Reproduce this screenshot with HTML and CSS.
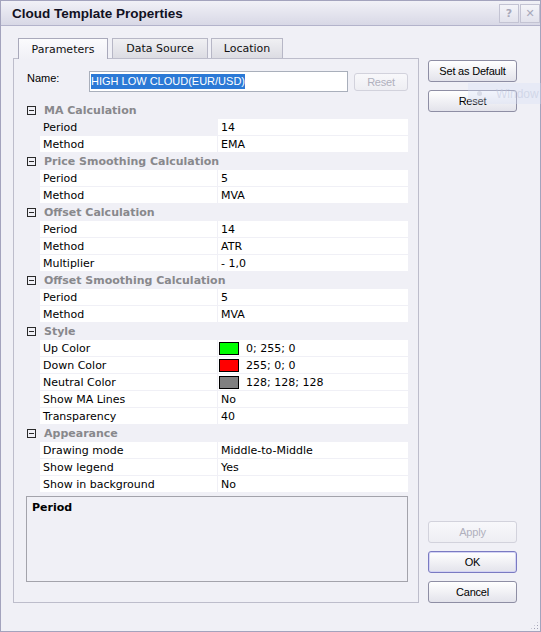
FILE: index.html
```html
<!DOCTYPE html>
<html lang="en">
<head>
    <meta charset="UTF-8">
    <title>Cloud Template Properties</title>
    <link rel="stylesheet" href="styles.css">
</head>
<body>
<div class="window">
    <div class="titlebar">
        <span class="title">Cloud Template Properties</span>
        <div class="title-buttons">
            <span class="tbtn">?</span>
            <span class="tbtn">&#x2715;</span>
        </div>
    </div>

    <div class="content">
        <div class="main">
            <div class="tabs">
                <div class="tab tab-active tab-params">Parameters</div>
                <div class="tab tab-source">Data Source</div>
                <div class="tab tab-location">Location</div>
            </div>

            <div class="panel">
                <div class="name-row">
                    <label class="name-label">Name:</label>
                    <div class="name-input"><span class="selected">HIGH LOW CLOUD(EUR/USD)</span></div>
                    <button class="button button-small" disabled>Reset</button>
                </div>

                <div class="grid">
                    <div class="category"><span class="minus"></span>MA Calculation</div>
                    <div class="prop prop-selected"><div class="name">Period</div><div class="val">14</div></div>
                    <div class="prop"><div class="name">Method</div><div class="val">EMA</div></div>

                    <div class="category"><span class="minus"></span>Price Smoothing Calculation</div>
                    <div class="prop"><div class="name">Period</div><div class="val">5</div></div>
                    <div class="prop"><div class="name">Method</div><div class="val">MVA</div></div>

                    <div class="category"><span class="minus"></span>Offset Calculation</div>
                    <div class="prop"><div class="name">Period</div><div class="val">14</div></div>
                    <div class="prop"><div class="name">Method</div><div class="val">ATR</div></div>
                    <div class="prop"><div class="name">Multiplier</div><div class="val">- 1,0</div></div>

                    <div class="category"><span class="minus"></span>Offset Smoothing Calculation</div>
                    <div class="prop"><div class="name">Period</div><div class="val">5</div></div>
                    <div class="prop"><div class="name">Method</div><div class="val">MVA</div></div>

                    <div class="category"><span class="minus"></span>Style</div>
                    <div class="prop"><div class="name">Up Color</div><div class="val"><span class="swatch swatch-green"></span>0; 255; 0</div></div>
                    <div class="prop"><div class="name">Down Color</div><div class="val"><span class="swatch swatch-red"></span>255; 0; 0</div></div>
                    <div class="prop"><div class="name">Neutral Color</div><div class="val"><span class="swatch swatch-gray"></span>128; 128; 128</div></div>
                    <div class="prop"><div class="name">Show MA Lines</div><div class="val">No</div></div>
                    <div class="prop"><div class="name">Transparency</div><div class="val">40</div></div>

                    <div class="category"><span class="minus"></span>Appearance</div>
                    <div class="prop"><div class="name">Drawing mode</div><div class="val">Middle-to-Middle</div></div>
                    <div class="prop"><div class="name">Show legend</div><div class="val">Yes</div></div>
                    <div class="prop"><div class="name">Show in background</div><div class="val">No</div></div>
                </div>

                <div class="description">Period</div>
            </div>
        </div>

        <div class="side">
            <div class="side-group">
                <button class="button">Set as Default</button>
                <button class="button">Reset</button>
            </div>
            <div class="side-group">
                <button class="button" disabled>Apply</button>
                <button class="button button-default">OK</button>
                <button class="button">Cancel</button>
            </div>
        </div>
    </div>

    <div class="ghost"><span class="ghost-dot"></span>Window</div>
    <div class="grip"></div>
</div>
</body>
</html>
```

FILE: styles.css
```css
body {
    margin: 0;
    background-color: #ffffff;
}
.window {
    position: relative;
    width: 541px;
    height: 632px;
    box-sizing: border-box;
    border: 1px solid #a3a3bd;
    background-color: #f0f0f6;
    display: flex;
    flex-direction: column;
    font-family: "Liberation Sans", Arial, sans-serif;
    font-size: 11px;
    color: #000000;
}

/* title bar */
.titlebar {
    height: 24px;
    border-bottom: 1px solid #b3b3cb;
    background: linear-gradient(#f1f1f7, #d8d8e6);
    display: flex;
    align-items: center;
    padding-left: 11px;
}
.title {
    font-weight: bold;
    font-size: 13.5px;
    color: #111122;
    flex: 1;
}
.title-buttons {
    display: flex;
    gap: 1px;
    align-self: flex-start;
    margin-top: 3px;
}
.tbtn {
    width: 18px;
    height: 17px;
    border: 1px solid #c3c3d3;
    background: linear-gradient(#f4f4f9, #e2e2ec);
    color: #a8a8ba;
    font-family: "DejaVu Sans", sans-serif;
    font-weight: bold;
    font-size: 11px;
    display: flex;
    align-items: center;
    justify-content: center;
}

/* body */
.content {
    flex: 1;
    display: flex;
    gap: 9px;
    padding: 12px 23px 28px 12px;
}
.main {
    width: 406px;
    display: flex;
    flex-direction: column;
}

/* tabs */
.tabs {
    display: flex;
    height: 21px;
    margin-bottom: -1px;
    padding-left: 5px;
    position: relative;
    z-index: 1;
}
.tab {
    box-sizing: border-box;
    height: 20px;
    border: 1px solid #b7b7c6;
    border-bottom: none;
    background: linear-gradient(#f0f0f3, #dcdce3);
    font-family: "DejaVu Sans", sans-serif;
    font-size: 11px;
    display: flex;
    align-items: center;
    justify-content: center;
    color: #111111;
}
.tab-active {
    height: 21px;
    background: linear-gradient(#fbfbfd, #f0f0f6);
    border-color: #a9a9bb;
}
.tab-params {
    width: 90px;
}
.tab-source {
    width: 96px;
    margin-left: 4px;
}
.tab-location {
    width: 72px;
    margin-left: 3px;
}

/* panel */
.panel {
    box-sizing: border-box;
    height: 545px;
    border: 1px solid #bdbdcb;
    background-color: #f0f0f6;
    padding: 12px 9px 0 12px;
}
.name-row {
    display: flex;
    align-items: center;
    height: 21px;
}
.name-label {
    width: 63px;
    padding-left: 1px;
    box-sizing: border-box;
    align-self: flex-start;
    padding-top: 1px;
}
.name-input {
    box-sizing: border-box;
    width: 259px;
    height: 21px;
    border: 1px solid #a9afbb;
    background-color: #ffffff;
    padding: 2px 0 0 1px;
}
.selected {
    background-color: #2b79d6;
    color: #ffffff;
    line-height: 15px;
    display: inline-block;
}

/* buttons */
.button {
    box-sizing: border-box;
    width: 89px;
    height: 22px;
    border: 1px solid #8e8ea4;
    border-radius: 3px;
    background: linear-gradient(#ffffff, #e3e3eb);
    font-family: "Liberation Sans", Arial, sans-serif;
    font-size: 11px;
    letter-spacing: -0.2px;
    color: #000000;
    padding: 0;
}
.button:disabled {
    border-color: #d2d2dc;
    background: linear-gradient(#f8f8fb, #eeeef3);
    color: #b0b0bd;
}
.button-small {
    width: 54px;
    height: 18px;
    margin-left: 6px;
}
.button-default {
    border-color: #7a7ac2;
    box-shadow: inset 0 0 0 1px #d4d4f4;
}

/* property grid */
.grid {
    margin-top: 10px;
    width: 382px;
    font-family: "DejaVu Sans", sans-serif;
    font-size: 11px;
}
.category {
    height: 17px;
    display: flex;
    align-items: center;
    font-weight: bold;
    color: #88888c;
    padding-bottom: 1px;
    box-sizing: border-box;
}
.minus {
    box-sizing: border-box;
    width: 9px;
    height: 9px;
    border: 1px solid #2a2a2a;
    margin: 1px 8px 0 1px;
    position: relative;
}
.minus::after {
    content: "";
    position: absolute;
    left: 1px;
    right: 1px;
    top: 3px;
    height: 1px;
    background-color: #2a2a2a;
}
.prop {
    display: grid;
    grid-template-columns: 177px 190px;
    column-gap: 1px;
    height: 16px;
    margin: 0 0 1px 14px;
}
.name, .val {
    background-color: #ffffff;
    padding: 1px 0 0 3px;
    box-sizing: border-box;
    white-space: nowrap;
    display: flex;
    align-items: center;
}
.prop-selected .name {
    background-color: #f0f0f6;
}
.swatch {
    box-sizing: border-box;
    width: 20px;
    height: 13px;
    border: 1px solid #000000;
    margin: 0 7px 0 -2px;
}
.swatch-green {
    background-color: #00ff00;
}
.swatch-red {
    background-color: #ff0000;
}
.swatch-gray {
    background-color: #808080;
}
.description {
    box-sizing: border-box;
    margin-top: 4px;
    width: 382px;
    height: 86px;
    border: 1px solid #a3a3ab;
    padding: 4px 5px;
    font-family: "DejaVu Sans", sans-serif;
    font-weight: bold;
    font-size: 11px;
}

/* right column */
.side {
    width: 89px;
    padding-top: 22px;
    display: flex;
    flex-direction: column;
    justify-content: space-between;
}
.side-group {
    display: flex;
    flex-direction: column;
    gap: 8px;
}

/* faded notification laid over the buttons */
.ghost {
    position: absolute;
    left: 467px;
    top: 82px;
    width: 73px;
    height: 21px;
    background-color: rgba(214, 224, 246, 0.35);
    color: rgba(190, 198, 220, 0.55);
    font-size: 12px;
    display: flex;
    align-items: center;
    padding-left: 9px;
    box-sizing: border-box;
    gap: 14px;
    white-space: nowrap;
}
.ghost-dot {
    width: 5px;
    height: 5px;
    border-radius: 50%;
    background-color: rgba(200, 204, 218, 0.6);
}
.grip {
    position: absolute;
    right: 1px;
    bottom: 1px;
    width: 9px;
    height: 9px;
    background:
        radial-gradient(circle, #a0a0b4 0.8px, transparent 1px) 0 0 / 3px 3px;
    clip-path: polygon(100% 0, 100% 100%, 0 100%);
}
```
